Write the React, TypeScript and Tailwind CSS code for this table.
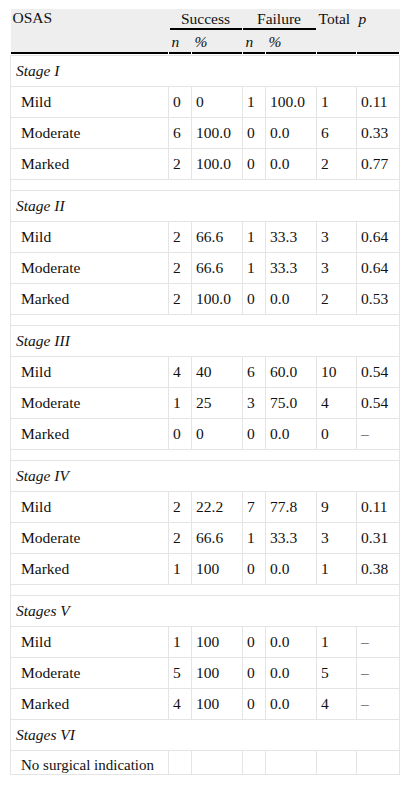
type Row = [string, string, string, string, string, string, string];

interface Section {
  title: string;
  rows: Row[];
  spacer: boolean;
}

const sections: Section[] = [
  {
    title: "Stage I",
    rows: [
      ["Mild", "0", "0", "1", "100.0", "1", "0.11"],
      ["Moderate", "6", "100.0", "0", "0.0", "6", "0.33"],
      ["Marked", "2", "100.0", "0", "0.0", "2", "0.77"],
    ],
    spacer: true,
  },
  {
    title: "Stage II",
    rows: [
      ["Mild", "2", "66.6", "1", "33.3", "3", "0.64"],
      ["Moderate", "2", "66.6", "1", "33.3", "3", "0.64"],
      ["Marked", "2", "100.0", "0", "0.0", "2", "0.53"],
    ],
    spacer: true,
  },
  {
    title: "Stage III",
    rows: [
      ["Mild", "4", "40", "6", "60.0", "10", "0.54"],
      ["Moderate", "1", "25", "3", "75.0", "4", "0.54"],
      ["Marked", "0", "0", "0", "0.0", "0", "–"],
    ],
    spacer: true,
  },
  {
    title: "Stage IV",
    rows: [
      ["Mild", "2", "22.2", "7", "77.8", "9", "0.11"],
      ["Moderate", "2", "66.6", "1", "33.3", "3", "0.31"],
      ["Marked", "1", "100", "0", "0.0", "1", "0.38"],
    ],
    spacer: true,
  },
  {
    title: "Stages V",
    rows: [
      ["Mild", "1", "100", "0", "0.0", "1", "–"],
      ["Moderate", "5", "100", "0", "0.0", "5", "–"],
      ["Marked", "4", "100", "0", "0.0", "4", "–"],
    ],
    spacer: false,
  },
  {
    title: "Stages VI",
    rows: [["No surgical indication", "", "", "", "", "", ""]],
    spacer: false,
  },
];

const widths = ["w-[158px]", "w-[23px]", "w-[51px]", "w-[23px]", "w-[51px]", "w-[40px]", "w-[43px]"];

// serif stack, set on every cell so nothing falls back to the sans default
const serif = "font-['Liberation_Serif','Times_New_Roman',serif] text-[15.5px] leading-[18px] text-[#111]";
const serifLast = "font-['Liberation_Serif','Times_New_Roman',serif] text-[15px] leading-[18px] text-[#111]";

export default function App() {
  return (
    <div className="px-[10px] pt-[9px] bg-white">
      <table className={"table-fixed border-collapse w-[389px] " + serif}>
        <colgroup>
          {widths.map((w, i) => (
            <col key={i} className={w} />
          ))}
        </colgroup>
        <thead className="bg-[#eeeeee]">
          <tr className="h-[22px]">
            <th className={"p-0 pl-[2px] text-left font-normal align-top " + serif}>OSAS</th>
            <th colSpan={2} className={"p-0 font-normal align-top " + serif}>
              <div className="mr-[1px] ml-[1px] h-[21px] pt-[1px] border-b-2 border-black text-center">Success</div>
            </th>
            <th colSpan={2} className={"p-0 font-normal align-top " + serif}>
              <div className="mr-[1px] h-[21px] pt-[1px] border-b-2 border-black text-center">Failure</div>
            </th>
            <th className={"p-0 pl-[2px] pt-[1px] text-left font-normal align-top " + serif}>Total</th>
            <th className={"p-0 pl-[2px] pt-[1px] text-left font-normal italic align-top " + serif}>p</th>
          </tr>
          <tr className="h-[21px]">
            <th className="p-0" />
            <th className={"p-0 pl-[3px] text-left font-normal italic " + serif}>n</th>
            <th className={"p-0 pl-[3px] text-left font-normal italic " + serif}>%</th>
            <th className={"p-0 pl-[3px] text-left font-normal italic " + serif}>n</th>
            <th className={"p-0 pl-[3px] text-left font-normal italic " + serif}>%</th>
            <th className="p-0" />
            <th className="p-0" />
          </tr>
          <tr className="h-[3px]">
            {widths.map((_, i) => (
              <th key={i} className="p-0 bg-white align-top">
                <div className="h-[2px] bg-black mr-[1px]" />
              </th>
            ))}
          </tr>
        </thead>
        <tbody>
          {sections.map((s) => (
            <SectionRows key={s.title} section={s} last={s.title === "Stages VI"} />
          ))}
        </tbody>
      </table>
    </div>
  );
}

function SectionRows({ section, last }: { section: Section; last: boolean }) {
  return (
    <>
      <tr className="h-[31px]">
        <td colSpan={7} className={"border border-[#e4e4e4] pl-[5px] pt-[1px] italic align-middle " + serif}>
          {section.title}
        </td>
      </tr>
      {section.rows.map((r, i) =>
        last ? (
          <tr key={i} className="h-[24px]">
            {r.map((c, j) => (
              <td
                key={j}
                className={
                  (j === 0 ? "pl-[10px] " : "pl-[4px] ") +
                  "pt-[5px] pb-0 align-top border border-[#e4e4e4] whitespace-nowrap " +
                  serifLast
                }
              >
                {c}
              </td>
            ))}
          </tr>
        ) : (
          <tr key={i} className="h-[31px]">
            {r.map((c, j) => (
              <td
                key={j}
                className={
                  (j === 0 ? "pl-[10px] " : "pl-[4px] ") +
                  "pt-[1px] align-middle border border-[#e4e4e4] whitespace-nowrap " +
                  serif
                }
              >
                {c}
              </td>
            ))}
          </tr>
        )
      )}
      {section.spacer && (
        <tr className="h-[11px]">
          <td colSpan={7} className="border border-[#e4e4e4] p-0" />
        </tr>
      )}
    </>
  );
}
